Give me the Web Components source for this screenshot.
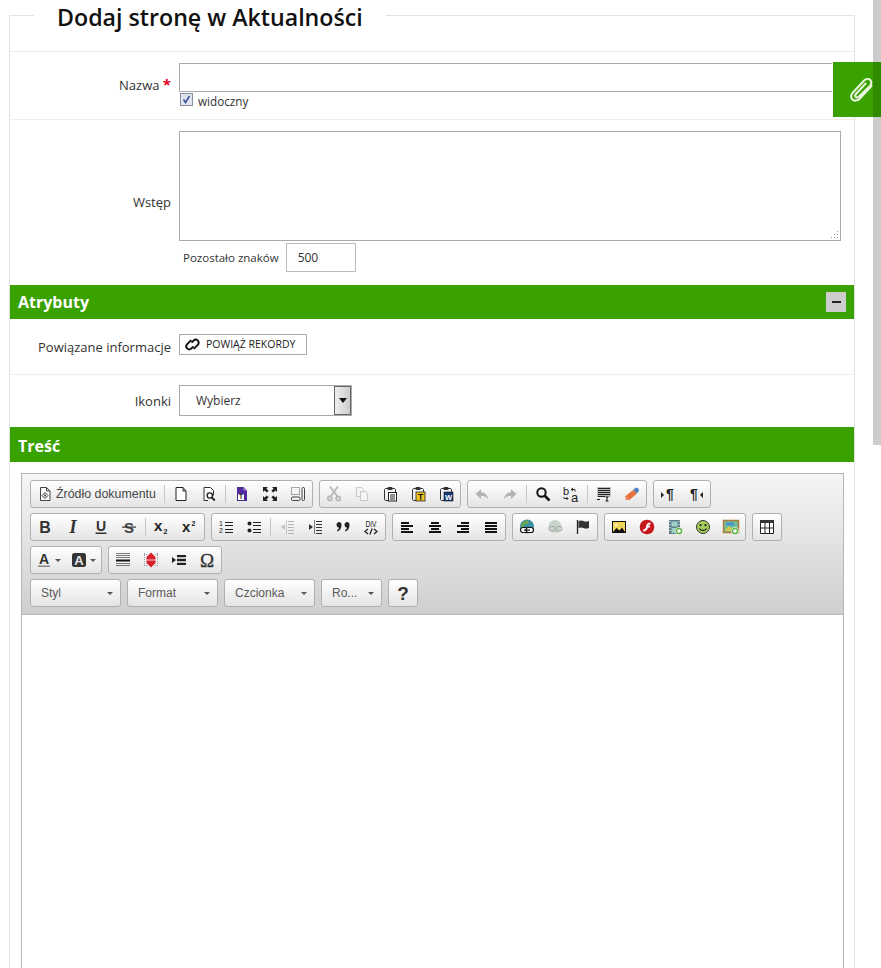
<!DOCTYPE html>
<html lang="pl">
<head>
<meta charset="utf-8">
<title>Dodaj stronę w Aktualności</title>
<style>
    html, body { margin: 0; height: 968px; overflow: hidden; background: #fff; }
    body { padding-left: 9px; font-family: "Open Sans", "Liberation Sans", sans-serif; color: #333; }
</style>
</head>
<body>
<news-form heading="Dodaj stronę w Aktualności">
    <form-row label="Nazwa" required pad="11px 0 8px" label-margin="-2px 0 2px">
        <text-box width="662px" height="27px"></text-box>
        <check-label>widoczny</check-label>
    </form-row>
    <form-row label="Wstęp" pad="11px 0 13px">
        <area-box></area-box>
        <char-counter value="500">Pozostało znaków</char-counter>
    </form-row>
    <section-bar collapsible>Atrybuty</section-bar>
    <form-row label="Powiązane informacje" pad="15px 0 19px" label-margin="2px 0 -2px" flat>
        <link-button>POWIĄŻ REKORDY</link-button>
    </form-row>
    <form-row label="Ikonki" pad="10px 0 11px">
        <fake-select>Wybierz</fake-select>
    </form-row>
    <section-bar tall>Treść</section-bar>
    <ck-editor>
        <ck-row>
            <ck-group>
                <ck-button icon="source" wide>Źródło dokumentu</ck-button><ck-sep></ck-sep>
                <ck-button icon="newpage"></ck-button><ck-button icon="preview"></ck-button><ck-sep></ck-sep>
                <ck-button icon="templates"></ck-button><ck-button icon="maximize"></ck-button><ck-button icon="blocks"></ck-button>
            </ck-group>
            <ck-group>
                <ck-button icon="cut"></ck-button><ck-button icon="copy"></ck-button><ck-button icon="paste"></ck-button><ck-button icon="pastetext"></ck-button><ck-button icon="pasteword"></ck-button>
            </ck-group>
            <ck-group>
                <ck-button icon="undo"></ck-button><ck-button icon="redo"></ck-button><ck-sep></ck-sep>
                <ck-button icon="find"></ck-button><ck-button icon="replace"></ck-button><ck-sep></ck-sep>
                <ck-button icon="selectall"></ck-button><ck-button icon="eraser"></ck-button>
            </ck-group>
            <ck-group>
                <ck-button icon="ltr"></ck-button><ck-button icon="rtl"></ck-button>
            </ck-group>
        </ck-row>
        <ck-row>
            <ck-group>
                <ck-button icon="bold"></ck-button><ck-button icon="italic"></ck-button><ck-button icon="underline"></ck-button><ck-button icon="strike"></ck-button><ck-sep></ck-sep>
                <ck-button icon="sub"></ck-button><ck-button icon="sup"></ck-button>
            </ck-group>
            <ck-group>
                <ck-button icon="numbered"></ck-button><ck-button icon="bullets"></ck-button><ck-sep></ck-sep>
                <ck-button icon="outdent"></ck-button><ck-button icon="indent"></ck-button><ck-button icon="quote"></ck-button><ck-button icon="div"></ck-button>
            </ck-group>
            <ck-group>
                <ck-button icon="left"></ck-button><ck-button icon="center"></ck-button><ck-button icon="right"></ck-button><ck-button icon="justify"></ck-button>
            </ck-group>
            <ck-group>
                <ck-button icon="link"></ck-button><ck-button icon="unlink"></ck-button><ck-button icon="anchor"></ck-button>
            </ck-group>
            <ck-group>
                <ck-button icon="image"></ck-button><ck-button icon="flash"></ck-button><ck-button icon="video"></ck-button><ck-button icon="smiley"></ck-button><ck-button icon="image2"></ck-button>
            </ck-group>
            <ck-group>
                <ck-button icon="table"></ck-button>
            </ck-group>
        </ck-row>
        <ck-row>
            <ck-group>
                <ck-button icon="textcolor" caret></ck-button><ck-button icon="bgcolor" caret></ck-button>
            </ck-group>
            <ck-group>
                <ck-button icon="hr"></ck-button><ck-button icon="pagebreak"></ck-button><ck-button icon="showblock"></ck-button><ck-button icon="omega"></ck-button>
            </ck-group>
        </ck-row>
        <ck-row>
            <ck-combo>Styl</ck-combo>
            <ck-combo>Format</ck-combo>
            <ck-combo>Czcionka</ck-combo>
            <ck-combo width="61px">Ro...</ck-combo>
            <ck-group>
                <ck-button icon="help"></ck-button>
            </ck-group>
        </ck-row>
    </ck-editor>
</news-form>
<attach-tab></attach-tab>
<page-scrollbar></page-scrollbar>

<script>
// small helper, every element below does the same thing in its constructor
function shadow(el, html) {
    el.attachShadow({mode: "open"}).innerHTML = html;
}

const LINES = (rows, color) => rows.map(r => `<rect x="${r[0]}" y="${r[1]}" width="${r[2]}" height="${r[3] || 1}" fill="${color || "#111"}"/>`).join("");
const PAGE = "M3.5 1.5h6l3.5 3.5v9.5h-9.5z M9.5 1.5v3.5h3.5";
const CLIP = `<path d="M6 14.5H4c-1 0-1.500-.5-1.500-1.500V4c0-1 .5-1.500 1.500-1.500h8c1 0 1.500.5 1.500 1.500v2" fill="none" stroke="#333"/><rect x="5.500" y="1" width="5" height="3" rx="1" fill="#333"/>`;
const PLUS = `<circle cx="12" cy="12" r="3.700" fill="#5fb04a" stroke="#fff" stroke-width=".6"/><path d="M12 10v4M10 12h4" stroke="#fff" stroke-width="1.300"/>`;

const ICONS = {
    source: `<path d="${PAGE}" fill="#fff" stroke="#444"/><path d="M8 6.500l3 3-3 3-3-3z" fill="none" stroke="#333"/><circle cx="8" cy="9.500" r="1" fill="#333"/>`,
    newpage: `<path d="M3 1.500h7l3 3.500v9.500h-10z" fill="#fff" stroke="#222"/><path d="M10 1.500v3.500h3" fill="none" stroke="#222"/>`,
    preview: `<path d="M3 1.500h6.500l3 3v5M7 14.500h-4v-13" fill="#fff" stroke="#333"/><circle cx="8.800" cy="9.500" r="2.600" fill="#fff" stroke="#222" stroke-width="1.400"/><path d="M10.800 11.500l3 3" stroke="#222" stroke-width="1.800"/>`,
    templates: `<path d="M3 1h6.500l3.500 3.500V15H3z" fill="#4f2a9a"/><path d="M9.500 1l3.500 3.500H9.500z" fill="#a58be0"/><rect x="4" y="8" width="6" height="6" fill="#fff"/><text x="7" y="13.200" font-family="Liberation Sans" font-size="6.500" font-weight="700" text-anchor="middle" fill="#222">T</text>`,
    maximize: `<path d="M1 1h5L4.400 2.600 6.600 4.800 4.800 6.600 2.600 4.400 1 6zM15 1v5l-1.600-1.600-2.200 2.200-1.800-1.800 2.200-2.200L10 1zM1 15v-5l1.600 1.600 2.200-2.200 1.800 1.800-2.200 2.200L6 15zM15 15h-5l1.600-1.600-2.200-2.200 1.800-1.800 2.200 2.200L15 10z" fill="#222"/>`,
    blocks: `<rect x="1.500" y="1.500" width="8" height="7" fill="none" stroke="#555" stroke-dasharray="1 1"/><rect x="1.500" y="11" width="8.500" height="3.500" rx="1.200" fill="none" stroke="#444"/><rect x="12" y="1.500" width="2.500" height="13" rx="1" fill="none" stroke="#444"/>`,
    cut: `<g stroke="#b8b8b8" fill="none" stroke-width="1.800"><path d="M4 .5l7.500 10M12 .5l-7.500 10"/><circle cx="3.800" cy="12.500" r="2"/><circle cx="12.200" cy="12.500" r="2"/></g>`,
    copy: `<g fill="#f4f4f4" stroke="#c8c8c8"><path d="M2.500 1.500h5l2 2v7h-7z"/><path d="M6.500 5.500h5l2 2v7h-7z"/></g>`,
    paste: CLIP + `<rect x="6.500" y="6.500" width="8" height="8.500" fill="#fff" stroke="#222"/>` + LINES([[8,8.500,5],[8,10.500,5],[8,12.500,5]], "#222"),
    pastetext: CLIP + `<rect x="6" y="6" width="9" height="9" fill="#f3c81e" stroke="#222" stroke-width=".8"/><text x="10.500" y="13.800" font-family="Liberation Sans" font-size="8.500" font-weight="700" text-anchor="middle" fill="#111">T</text>`,
    pasteword: CLIP + `<rect x="6" y="6" width="9" height="9" fill="#153a7a" stroke="#111" stroke-width=".6"/><text x="10.500" y="13.500" font-family="Liberation Sans" font-size="7.500" font-weight="700" text-anchor="middle" fill="#fff">W</text>`,
    undo: `<path d="M7 3L1.500 8 7 13v-3c3 0 5 .5 7 3-.4-4-3-6.600-7-7z" fill="#b4b4b4"/>`,
    redo: `<path d="M9 3l5.500 5L9 13v-3c-3 0-5 .5-7 3 .4-4 3-6.600 7-7z" fill="#b4b4b4"/>`,
    find: `<circle cx="6.500" cy="6.500" r="4.200" fill="none" stroke="#111" stroke-width="2"/><path d="M9.500 9.500l5 5" stroke="#111" stroke-width="2.600"/>`,
    replace: `<text x="0" y="9" font-family="Liberation Sans" font-size="11" fill="#222">b</text><text x="8" y="15.500" font-family="Liberation Sans" font-size="13" fill="#222">a</text><path d="M8 3.500h4v2M8 3.500l2-1.500M8 3.500l2 1.500M1 11v1.500h4M5 12.500l-1.500-1.500M5 12.500l-1.500 1.500" fill="none" stroke="#333"/>`,
    selectall: `<rect x="1" y="1" width="14" height="10" fill="#bbb"/>` + LINES([[2,2,12],[2,4,12],[2,6,12],[2,8,12],[2,10,7]], "#222") + `<path d="M11 11v4M9.500 11h3M9.500 15h3" stroke="#111"/><rect x="1" y="13" width="3" height="1" fill="#111"/>`,
    eraser: `<path d="M1 10.500L9 4l4 3.500-7.500 6.500L2 14z" fill="#e9733f"/><path d="M9 4l3-2.500 3 1.500-.5 2.500-1.500 2z" fill="#4d7fb8"/><path d="M1.500 11l4 3" stroke="#f3b090"/>`,
    ltr: `<path d="M1 6l3 3-3 3z" fill="#222"/><text x="10" y="13" font-family="Liberation Sans" font-size="14" font-weight="700" text-anchor="middle" fill="#222">¶</text>`,
    rtl: `<path d="M15 6l-3 3 3 3z" fill="#222"/><text x="6" y="13" font-family="Liberation Sans" font-size="14" font-weight="700" text-anchor="middle" fill="#222">¶</text>`,
    bold: `<text x="8" y="14" font-family="Liberation Sans" font-size="16" font-weight="700" text-anchor="middle" fill="#333">B</text>`,
    italic: `<text x="8" y="14" font-family="Liberation Serif" font-size="18" font-weight="700" font-style="italic" text-anchor="middle" fill="#333">I</text>`,
    underline: `<text x="8" y="12" font-family="Liberation Sans" font-size="14" font-weight="700" text-anchor="middle" fill="#333">U</text><rect x="2.500" y="13.500" width="11" height="1.500" fill="#333"/>`,
    strike: `<text x="8" y="13.500" font-family="Liberation Sans" font-size="15" font-weight="700" text-anchor="middle" fill="#444">S</text><rect x="1" y="7.500" width="14" height="1.200" fill="#333"/>`,
    sub: `<text x="0" y="12" font-family="Liberation Sans" font-size="15" font-weight="700" fill="#222">x</text><text x="9.500" y="14.500" font-family="Liberation Sans" font-size="7" font-weight="700" fill="#222">2</text>`,
    sup: `<text x="0" y="13" font-family="Liberation Sans" font-size="15" font-weight="700" fill="#222">x</text><text x="9.500" y="7" font-family="Liberation Sans" font-size="7" font-weight="700" fill="#222">2</text>`,
    numbered: `<text x="1" y="7" font-family="Liberation Sans" font-size="7" fill="#222">1</text><text x="1" y="14" font-family="Liberation Sans" font-size="7" fill="#222">2</text>` + LINES([[7,3,8],[7,6,8],[7,10,8],[7,13,8]], "#222"),
    bullets: `<circle cx="3.500" cy="4.500" r="2" fill="#222"/><circle cx="3.500" cy="11.500" r="2" fill="#222"/>` + LINES([[7,3,8],[7,6,8],[7,10,8],[7,13,8]], "#222"),
    outdent: LINES([[9,2,6],[9,5,6],[9,8,6],[9,11,6],[9,14,6]], "#b4b4b4") + `<path d="M7.500 1v14" stroke="#c8c8c8"/><path d="M6 5L2 8l4 3z" fill="#c0c0c0"/>`,
    indent: LINES([[9,2,6],[9,5,6],[9,8,6],[9,11,6],[9,14,6]], "#333") + `<path d="M7.500 1v14" stroke="#777"/><path d="M2 5l4 3-4 3z" fill="#333"/>`,
    quote: `<path d="M3.500 3a3 3 0 0 1 3 3.200c0 3-1.600 5.300-4 6.300l-.6-1c1.200-.7 1.900-1.700 2-2.700A3 3 0 0 1 3.500 3zM11.500 3a3 3 0 0 1 3 3.200c0 3-1.600 5.300-4 6.300l-.6-1c1.200-.7 1.900-1.700 2-2.700A3 3 0 0 1 11.500 3z" fill="#222"/>`,
    div: `<text x="8" y="8" font-family="Liberation Sans" font-size="9" text-anchor="middle" fill="#222" textLength="11" lengthAdjust="spacingAndGlyphs">DIV</text><path d="M5 10l-3 2.500L5 15M11 10l3 2.500-3 2.500M9.200 9.500l-2.400 6" fill="none" stroke="#222" stroke-width="1.300"/>`,
    left: LINES([[2,3,8,2],[2,6,12,2],[2,9,8,2],[2,12,12,2]]),
    center: LINES([[4,3,8,2],[2,6,12,2],[4,9,8,2],[2,12,12,2]]),
    right: LINES([[6,3,8,2],[2,6,12,2],[6,9,8,2],[2,12,12,2]]),
    justify: LINES([[2,3,12,2],[2,6,12,2],[2,9,12,2],[2,12,12,2]]),
    link: `<circle cx="8" cy="7.500" r="7" fill="#3f8fa8"/><path d="M3 4c2-2 4-3 6-2 2 1 0 3-1 3S5 5 5 7 2 8 2 7z" fill="#6aa84f"/><g fill="#fff" stroke="#111" stroke-width="1.200"><rect x="1.500" y="8.500" width="7.500" height="5" rx="2.500"/><rect x="7" y="8.500" width="7.500" height="5" rx="2.500"/></g><rect x="5" y="10.500" width="6" height="1.200" fill="#111"/>`,
    unlink: `<circle cx="8" cy="7.500" r="6.500" fill="#c9d4cc"/><g fill="none" stroke="#a0a8a2"><rect x="2" y="7.500" width="6" height="4.500" rx="2"/><rect x="9" y="7.500" width="6" height="4.500" rx="2"/></g>`,
    anchor: `<path d="M2.500 1v14" stroke="#222" stroke-width="1.300"/><path d="M3.500 2c2-.8 3.500-.8 5 0s3 .8 5.500 0v7c-2.500.8-4 .8-5.500 0s-3-.8-5 0z" fill="#333"/>`,
    image: `<rect x="1.500" y="2.500" width="13" height="11" fill="#f4d75a" stroke="#111"/><circle cx="5" cy="6" r="1.500" fill="#fdf3b5"/><path d="M2 13l3.500-4 3 2.500L11 8.500l3 4.500z" fill="#111"/>`,
    flash: `<circle cx="8" cy="8" r="7.300" fill="#c8161d"/><path d="M11.500 3.500c-3 0-3.800 1.500-4.300 3.500-.4 2-1 3.500-3 3.500v2c3 0 4.300-2 4.800-4h2V6.500H9.300c.2-.6.9-1 2.200-1z" fill="#fff"/>`,
    video: `<rect x="2" y="1" width="11" height="14" fill="#5e7e8c"/><rect x="4.500" y="2.500" width="6" height="5" fill="#9ed1c7"/><rect x="4.500" y="9" width="6" height="5" fill="#9ed1c7"/>` + LINES([[2.500,2,1,1],[2.500,5,1,1],[2.500,8,1,1],[2.500,11,1,1],[11.500,2,1,1],[11.500,5,1,1]], "#fff") + PLUS,
    smiley: `<circle cx="8" cy="8" r="6.500" fill="#a6cf5a" stroke="#333"/><circle cx="5.500" cy="6.200" r="1.100" fill="#222"/><circle cx="10.500" cy="6.200" r="1.100" fill="#222"/><path d="M4.500 9.500c1 2.500 6 2.500 7 0" fill="none" stroke="#222" stroke-width="1.100"/>`,
    image2: `<rect x=".5" y="1.500" width="15" height="12" fill="#6bbf9f" stroke="#b27a37" stroke-width="1.500"/><path d="M2 11l4-4 3 3 2-2 3 3v1H2z" fill="#d8c84a"/><rect x="3" y="3.500" width="8" height="3" fill="#4f8fd0"/>` + PLUS,
    table: `<path d="M1.500 1.500h13v13h-13zM1.500 9h13M6 4v10.500M10.500 4v10.500" fill="#fff" stroke="#222"/><rect x="1" y="1" width="14" height="3" fill="#333"/>`,
    textcolor: `<text x="7" y="12" font-family="Liberation Sans" font-size="14" font-weight="700" text-anchor="middle" fill="#333">A</text><rect x="1" y="13.500" width="12" height="1.500" fill="#888"/>`,
    bgcolor: `<rect x="0" y="1" width="14" height="14" rx="2.500" fill="#333"/><text x="7" y="13" font-family="Liberation Sans" font-size="13" font-weight="700" text-anchor="middle" fill="#e8e8e8">A</text>`,
    hr: LINES([[1,1,14,1],[1,3,14,1],[1,5,14,1],[1,11,14,1],[1,13,14,1]], "#777") + `<rect x="1" y="7.500" width="14" height="2" fill="#111"/>`,
    pagebreak: `<path d="M1.500 1v14M14.500 1v14M1 2.500h3M12 2.500h3M1 13.500h3M12 13.500h3" stroke="#999" stroke-dasharray="1 1" fill="none"/><path d="M8 .5l4.500 4.500v6L8 15.500 3.500 11V5z" fill="#d3202a"/><rect x="3" y="7.500" width="10" height="1" fill="#f3d0d0"/>`,
    showblock: `<path d="M1 5l4 3-4 3z" fill="#222"/>` + LINES([[6,3,9,2],[6,7,9,2],[6,11,9,2]], "#222") + `<rect x="6" y="5.500" width="9" height="1" fill="#999"/><rect x="6" y="9.500" width="9" height="1" fill="#999"/>`,
    omega: `<text x="8" y="14.500" font-family="Liberation Serif" font-size="19" text-anchor="middle" fill="#333" stroke="#333" stroke-width=".3">Ω</text>`,
    help: `<text x="8" y="15" font-family="Liberation Sans" font-size="19" font-weight="700" text-anchor="middle" fill="#333">?</text>`
};

class NewsForm extends HTMLElement {
    constructor() {
        super();
        shadow(this, `<style>
            :host { display: block; width: 846px; }
            fieldset { margin: 0; padding: 0; border: 1px solid #e2e2e2; min-width: 0; }
            legend { margin-left: 24px; padding: 0 23px; font: 600 23.2px/31px "Open Sans", sans-serif; color: #111; }
            legend span { display: block; transform: translateY(2px); }
            .spacer { height: 20px; }
        </style>
        <fieldset>
            <legend><span>${this.getAttribute("heading")}</span></legend>
            <div class="spacer"></div>
            <slot></slot>
        </fieldset>`);
    }
}

class FormRow extends HTMLElement {
    constructor() {
        super();
        const star = this.hasAttribute("required") ? ` <span class="req">*</span>` : "";
        shadow(this, `<style>
            :host { display: block; border-top: 1px solid #eee; }
            .row { display: grid; grid-template-columns: 161px 1fr; column-gap: 8px; align-items: center; padding: ${this.getAttribute("pad") || "10px 0"}; }
            label { text-align: right; margin: ${this.getAttribute("label-margin") || "0"}; font: 13px/18px "Open Sans", sans-serif; color: #333; }
            .req { color: #e2001a; font-weight: 700; font-size: 15px; line-height: 10px; }
            .ctl { display: flex; flex-direction: column; align-items: flex-start; min-width: 0; }
        </style>
        <div class="row"><label>${this.getAttribute("label")}${star}</label><div class="ctl"><slot></slot></div></div>`);
    }
    connectedCallback() {
        // the row straight under a section bar has no top rule
        if (this.hasAttribute("flat")) this.style.borderTop = "0";
    }
}

class TextBox extends HTMLElement {
    constructor() {
        super();
        shadow(this, `<style>
            :host { display: block; }
            input { display: block; box-sizing: content-box; padding: 0; border: 1px solid #aaa; outline: 0; background: #fff;
                width: ${this.getAttribute("width")}; height: ${this.getAttribute("height")}; }
        </style><input type="text">`);
    }
}

class CheckLabel extends HTMLElement {
    constructor() {
        super();
        shadow(this, `<style>
            :host { display: flex; align-items: flex-start; gap: 5px; margin: 1px 0 0 1px; height: 18px; font: 11.700px/17px "Open Sans", sans-serif; color: #333; }
            svg { display: block; width: 13px; height: 13px; }
        </style>
        <svg viewBox="0 0 13 13"><rect x=".5" y=".5" width="12" height="12" fill="#dfe3ee" stroke="#8a8d9c"/><path d="M3.500 6.500l2 3 4-6.500" fill="none" stroke="#3a4f9c" stroke-width="1.500"/></svg>
        <span><slot></slot></span>`);
    }
}

class AreaBox extends HTMLElement {
    constructor() {
        super();
        shadow(this, `<style>
            :host { display: block; position: relative; width: 662px; height: 110px; }
            textarea { display: block; box-sizing: border-box; width: 100%; height: 100%; margin: 0; border: 1px solid #aaa; outline: 0; resize: none; background: #fff; }
            svg { position: absolute; right: 2px; bottom: 2px; }
        </style>
        <textarea></textarea>
        <svg width="10" height="10"><path d="M8 2h1v1H8zM5 5h1v1H5zM8 5h1v1H8zM2 8h1v1H2zM5 8h1v1H5zM8 8h1v1H8z" fill="#999"/></svg>`);
    }
}

class CharCounter extends HTMLElement {
    constructor() {
        super();
        shadow(this, `<style>
            :host { display: flex; align-items: center; gap: 7px; margin: 2px 0 0 4px; font: 11.500px/16px "Open Sans", sans-serif; color: #333; }
            .val { box-sizing: border-box; width: 70px; height: 29px; padding-left: 11px; border: 1px solid #bbb; font-size: 12px; line-height: 27px; background: #fff; }
        </style>
        <span><slot></slot></span><div class="val">${this.getAttribute("value")}</div>`);
    }
}

class SectionBar extends HTMLElement {
    constructor() {
        super();
        const btn = this.hasAttribute("collapsible") ? `<span class="min"><i></i></span>` : "";
        const tall = this.hasAttribute("tall");
        shadow(this, `<style>
            :host { display: flex; align-items: center; justify-content: space-between; box-sizing: border-box; padding: ${tall ? "2px" : "0"} 8px 0;
                background: #39a100; color: #fff; font: 700 16px/24px "Open Sans", sans-serif; height: ${tall ? 35 : 34}px; }
            .min { display: flex; align-items: center; justify-content: center; width: 20px; height: 20px; background: #ccc; }
            i { display: block; width: 9px; height: 2px; background: #222; }
        </style><span><slot></slot></span>${btn}`);
    }
}

class LinkButton extends HTMLElement {
    constructor() {
        super();
        shadow(this, `<style>
            :host { display: flex; align-items: center; box-sizing: border-box; width: 128px; height: 21px; padding-left: 4px; gap: 5px;
                border: 1px solid #aaa; font: 10.500px/19px "Open Sans", sans-serif; color: #222; }
            svg { display: block; }
        </style>
        <svg width="17" height="17" viewBox="0 0 17 17" fill="none" stroke="#111" stroke-width="2" stroke-linecap="round">
            <g transform="rotate(-45 8.500 8.500)">
                <path d="M10 4.500H5a3 3 0 0 0 0 6h2"/>
                <path d="M7 12.500h5a3 3 0 0 0 0-6h-2"/>
            </g>
        </svg>
        <span><slot></slot></span>`);
    }
}

class FakeSelect extends HTMLElement {
    constructor() {
        super();
        shadow(this, `<style>
            :host { display: flex; align-items: center; justify-content: space-between; box-sizing: border-box; width: 173px; height: 31px; padding-left: 16px;
                border: 1px solid #aaa; font: 12px/29px "Open Sans", sans-serif; color: #333; background: #fff; }
            .arr { display: flex; align-items: center; justify-content: center; box-sizing: border-box; width: 17px; height: 29px;
                border: 1px solid #666; background: linear-gradient(90deg, #eee, #ccc); }
            .arr i { border: 4px solid transparent; border-top: 5px solid #111; border-bottom: 0; }
        </style><span><slot></slot></span><div class="arr"><i></i></div>`);
    }
}

class CkEditor extends HTMLElement {
    constructor() {
        super();
        shadow(this, `<style>
            :host { display: block; margin: 11px 10px 0 11px; border: 1px solid #b6b6b6; background: #fff; }
            .bar { display: flex; flex-direction: column; gap: 5px; padding: 6px 8px 7px; border-bottom: 1px solid #b6b6b6;
                background: linear-gradient(#f5f5f5, #cfcfcf); }
            .body { height: 600px; }
        </style><div class="bar"><slot></slot></div><div class="body"></div>`);
    }
}

class CkRow extends HTMLElement {
    constructor() {
        super();
        shadow(this, `<style>:host { display: flex; gap: 6px; height: 28px; }</style><slot></slot>`);
    }
}

class CkGroup extends HTMLElement {
    constructor() {
        super();
        shadow(this, `<style>
            :host { display: flex; align-items: center; box-sizing: border-box; height: 28px; border: 1px solid #b0b0b0; border-radius: 3px;
                background: linear-gradient(#fff, #e4e4e4); }
        </style><slot></slot>`);
    }
}

class CkSep extends HTMLElement {
    constructor() {
        super();
        shadow(this, `<style>:host { display: block; width: 1px; height: 18px; margin: 0 2px; background: #c6c6c6; }</style>`);
    }
}

class CkButton extends HTMLElement {
    constructor() {
        super();
        const wide = this.hasAttribute("wide");
        const caret = this.hasAttribute("caret");
        const w = wide ? 131 : caret ? 35 : 28;
        shadow(this, `<style>
            :host { display: flex; align-items: center; box-sizing: border-box; width: ${w}px; height: 26px; padding-left: 6px; gap: ${wide ? 3 : 2}px;
                font: 12.400px/16px "Liberation Sans", sans-serif; color: #474747; white-space: nowrap; }
            svg { display: block; flex: none; overflow: visible; }
            .caret { border: 3px solid transparent; border-top: 3px solid #555; border-bottom: 0; }
        </style>
        <svg width="16" height="16" viewBox="0 0 16 16">${ICONS[this.getAttribute("icon")]}</svg>${caret ? `<i class="caret"></i>` : ""}<slot></slot>`);
    }
}

class CkCombo extends HTMLElement {
    constructor() {
        super();
        shadow(this, `<style>
            :host { display: flex; align-items: center; justify-content: space-between; box-sizing: border-box; width: ${this.getAttribute("width") || "91px"}; height: 28px;
                padding: 0 7px 0 10px; border: 1px solid #b0b0b0; border-radius: 3px; background: linear-gradient(#fff, #e4e4e4);
                font: 12px/26px "Liberation Sans", sans-serif; color: #5a5a5a; }
            i { border: 3px solid transparent; border-top: 3px solid #555; border-bottom: 0; }
        </style><span><slot></slot></span><i></i>`);
    }
}

class AttachTab extends HTMLElement {
    constructor() {
        super();
        shadow(this, `<style>
            :host { position: fixed; z-index: 2; left: 833px; top: 62px; width: 48px; height: 55px; display: flex; align-items: center; justify-content: center;
                padding-left: 8px; box-sizing: border-box; background: linear-gradient(90deg, #39a100 40px, #2f8a00 40px); box-shadow: -1px 0 0 #fff; }
        </style>
        <svg width="30" height="30" viewBox="0 0 26 26" fill="none" stroke="#eaf6dc" stroke-width="1.800" stroke-linecap="round">
            <path d="M22 9.500L12 20.500c-2 2-5 2.200-6.500.7S4 17.200 6 15.200L15.500 5c1.500-1.700 4-2 5.500-.7s1.200 3.700-.3 5.300L11.500 18.500c-1 1-2.300 1.200-3 .5s-.5-2 .5-3l8-8.500"/>
        </svg>`);
    }
}

class PageScrollbar extends HTMLElement {
    constructor() {
        super();
        shadow(this, `<style>
            :host { position: fixed; z-index: 1; left: 873px; top: 0; width: 8px; height: 445px; background: #ccc; }
        </style>`);
    }
}

customElements.define("news-form", NewsForm);
customElements.define("form-row", FormRow);
customElements.define("text-box", TextBox);
customElements.define("check-label", CheckLabel);
customElements.define("area-box", AreaBox);
customElements.define("char-counter", CharCounter);
customElements.define("section-bar", SectionBar);
customElements.define("link-button", LinkButton);
customElements.define("fake-select", FakeSelect);
customElements.define("ck-editor", CkEditor);
customElements.define("ck-row", CkRow);
customElements.define("ck-group", CkGroup);
customElements.define("ck-sep", CkSep);
customElements.define("ck-button", CkButton);
customElements.define("ck-combo", CkCombo);
customElements.define("attach-tab", AttachTab);
customElements.define("page-scrollbar", PageScrollbar);
</script>
</body>
</html>
